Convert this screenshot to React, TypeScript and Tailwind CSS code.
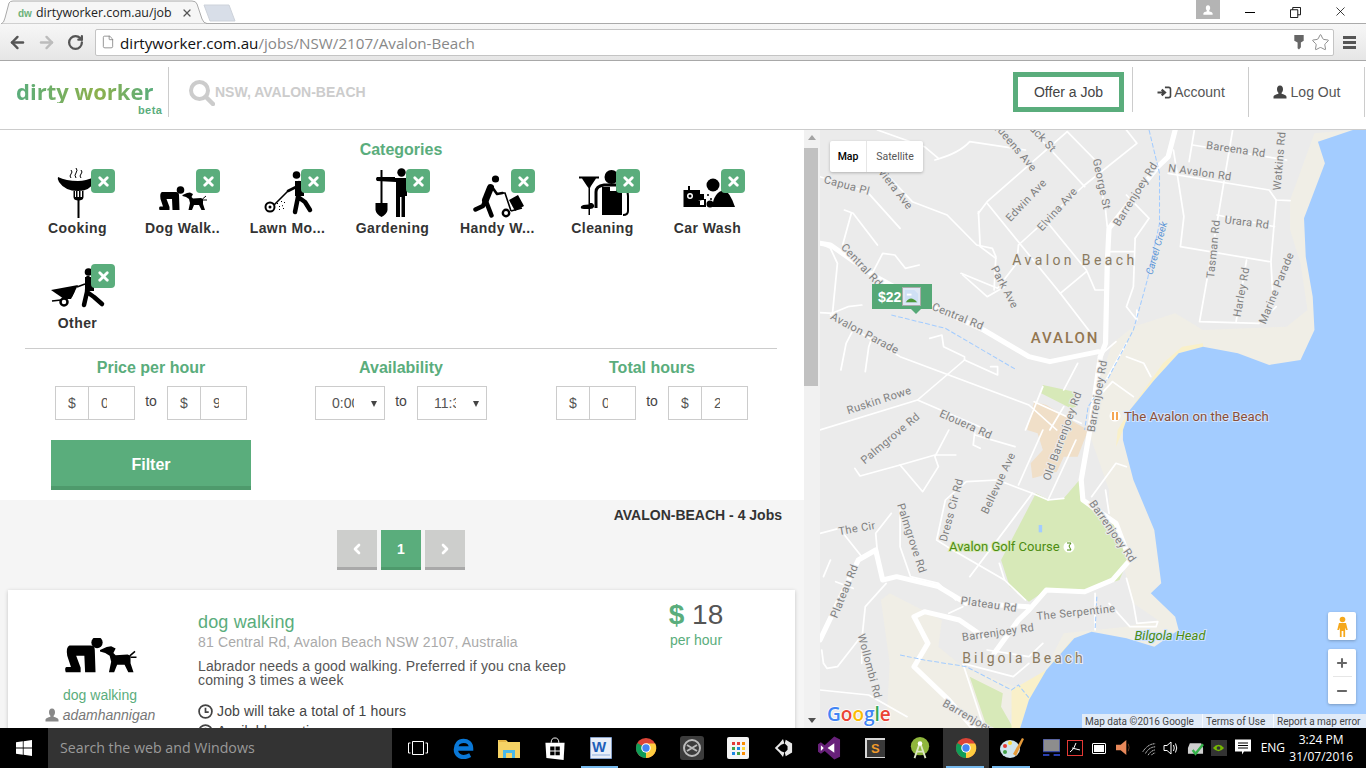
import React from "react";
import { ArrowLeft, ArrowRight, RotateCw, File, Star, X, ChevronLeft, ChevronRight, Minus, Plus } from "lucide-react";

const thinRoads = [
  "M165 0 L300 50 L340 85", "M330 90 Q400 70 430 35 L590 60", "M180 120 L265 215 L365 255 L450 345 L495 355 L505 380 L500 480",
  "M0 140 L135 185 L230 295", "M70 240 L95 250 L165 345", "M90 250 L65 345", "M455 250 L480 215 L710 5", "M480 220 L690 490 L775 605",
  "M455 245 L460 350 L505 385", "M570 345 L760 165 L910 40 L880 0", "M570 345 L565 400 L510 475 L405 430", "M655 280 L765 420 L790 480 L815 480",
  "M690 490 L765 425", "M610 0 L760 170", "M710 5 L790 90 L820 240 L825 290", "M1070 45 L1340 90", "M1000 130 L1290 180 L1310 210 L1350 212",
  "M1185 0 L1140 280 L1090 575 L1260 580 L1310 530", "M1015 60 L1045 260 L1035 350 L1290 395", "M1310 210 L1295 395 L1300 490 L1270 580",
  "M1140 255 L1305 290", "M1225 390 L1195 575", "M1075 0 L1060 95", "M835 365 L900 365", "M905 325 L945 265 L880 195", "M905 325 L900 470 L880 530 L910 570 L910 540",
  "M0 340 L30 355 L50 400 L35 560", "M0 548 L40 550", "M150 430 L180 370 L215 375 L245 415 L285 405", "M410 435 L480 500 L530 470", "M35 550 L80 530 L120 525",
  "M60 720 L75 640 L100 590", "M130 725 L140 650 L150 620", "M30 555 L230 680 L600 825 L680 900", "M315 625 L350 615 L355 650 L415 680 L415 690 L510 735 L510 710 L490 710",
  "M415 690 L280 810", "M0 900 L280 810 L480 900", "M850 635 L800 680", "M880 680 L930 700 L950 740", "M840 755 L900 800", "M880 640 L800 790 L770 900",
  "M640 770 L590 900", "M615 815 L750 880", "M700 830 L660 900", "M740 700 L700 780", "M800 800 L840 755", "M100 1015 L115 1038 L230 1005 L330 975 L390 975",
  "M370 900 L330 980 L340 1010 L295 1085 L230 1005", "M445 900 L440 945 L460 955", "M445 915 L560 950", "M610 1090 L510 1050 L420 1055 L360 1110 L335 1230 L365 1250 L530 1350",
  "M570 1065 L640 900", "M610 1090 L430 1340", "M610 1090 L655 1110 L700 1105", "M655 1110 L735 930", "M205 1150 L160 1210 L165 1270", "M230 1140 L230 1250 L260 1340 L340 1360 L390 1410",
  "M0 1210 L55 1195 L120 1280", "M30 1290 L10 1340", "M190 1360 L130 1430 L120 1530 L120 1600", "M45 1355 L95 1375", "M0 1680 L140 1695 L250 1760", "M5 1560 L10 1600 L20 1615 L50 1610 L110 1530",
  "M370 1450 L410 1430", "M790 1390 L790 1500", "M880 1345 L900 1420 L910 1480 L970 1475 L965 1490 L890 1490 L830 1420", "M820 1080 L830 1150", "M640 1540 L600 1580 L480 1560",
  "M410 1600 L470 1790", "M410 1600 L555 1640 L600 1600", "M515 1300 L530 1350 L590 1410", "M780 1100 L850 1000 L880 1010",
];

const mainRoads = [
  "M1020 0 L1000 80 L970 110 L830 295 L825 400 L820 640 L805 680 L775 900 L750 1050 L755 1110 L850 1180 L890 1290 L840 1350 L760 1385 L650 1380 L600 1440 L570 1470 L500 1570",
  "M800 665 L660 695 L600 680 L470 600 L300 520 L160 440 L30 345 L0 340",
  "M0 1530 L110 1290 L160 1260 L180 1350 L220 1340 L340 1370 L420 1420 L600 1430",
  "M470 1520 L400 1470 L300 1445 L270 1460 L310 1540 L270 1610 L370 1710 L440 1794",
];

// map labels, page coordinates (the svg viewBox starts at the map origin)
const labels: [string, number, number, number][] = [
  ["Bareena Rd", 1236, 153, 8], ["N Avalon Rd", 1200, 176, 8], ["Watkins Rd", 1279, 165, -85], ["Urara Rd", 1247, 226, 7], ["Tasman Rd", 1213, 253, -84],
  ["Harley Rd", 1241, 296, -80], ["Marine Parade", 1276, 292, -68], ["Barrenjoey Rd", 1135, 198, -58], ["George St", 1102, 188, 78], ["Elvina Ave", 1057, 213, -48],
  ["Edwin Ave", 1026, 204, -47], ["Queens Ave", 1015, 150, 50], ["Jack St", 1041, 140, 47], ["Capua Pl", 847, 189, 15], ["Riviera Ave", 893, 189, 52],
  ["Central Rd", 862, 269, 47], ["Central Rd", 958, 320, 22], ["Avalon Parade", 865, 337, 28], ["Park Ave", 1005, 291, 62], ["Barrenjoey Rd", 1097, 400, -80],
  ["Old Barrenjoey Rd", 1062, 440, -70], ["Ruskin Rowe", 879, 404, -18], ["Elouera Rd", 966, 428, 24], ["Palmgrove Rd", 890, 442, -40], ["Bellevue Ave", 998, 487, -65],
  ["Dress Cir Rd", 951, 514, -75], ["The Cir", 857, 532, -10], ["Palmgrove Rd", 912, 542, 72], ["Barrenjoey Rd", 1113, 535, 55], ["Plateau Rd", 989, 608, 8],
  ["The Serpentine", 1076, 616, -6], ["Barrenjoey Rd", 998, 636, -8], ["Plateau Rd", 844, 595, -68], ["Wollombi Rd", 870, 670, 75], ["Barrenjoey", 968, 720, 30],
];

function MapCanvas() {
  return (
    <div className="relative h-full flex-1 overflow-hidden bg-[#ebebeb]">
      <svg viewBox="0 0 1568 1794" preserveAspectRatio="none" className="absolute inset-0 h-full w-full">
        <path fill="#f0eee6" d="M1530 0 L1420 10 L1350 210 L1350 300 L1380 400 L1400 540 L1340 590 L1100 600 L1020 550 L900 590 L840 640 L800 760 L770 900 L830 1080 L830 1150 L880 1340 L900 1420 L970 1470 L880 1490 L700 1510 L560 1794 L1568 1794 L1568 0Z" />
        <path fill="#f0eee6" d="M175 1410 L200 1390 L350 1470 L340 1550 L410 1610 L560 1670 L540 1794 L190 1794 L200 1600Z" />
        <path fill="#d7e9b8" d="M620 1090 L660 1110 L700 1105 L745 1050 L750 1110 L780 1140 L850 1190 L885 1290 L860 1350 L770 1380 L650 1380 L600 1415 L545 1370 L520 1290Z" />
        <path fill="#d7e9b8" d="M430 1640 L525 1690 L520 1730 L555 1794 L480 1794Z M640 765 L730 785 L735 830 L720 835 L635 790Z" />
        <path fill="#f0dfc8" d="M615 815 L650 825 L735 880 L770 900 L740 980 L700 980 L680 1025 L610 1045 L605 1000 L640 960 L625 910 L595 900Z" />
        <path fill="#f9f0c9" d="M1100 640 L1040 650 L985 700 L890 840 L855 900 L850 950 L870 900 L890 840 L960 750 L1030 670 L1100 650Z M730 1520 L650 1620 L550 1680 L550 1794 L575 1794 L600 1710Z" />
        <path fill="#a3ccff" d="M1530 0 L1430 35 L1450 100 L1390 265 L1395 380 L1415 500 L1420 600 L1380 690 L1290 705 L1200 670 L1100 650 L1030 670 L960 750 L890 840 L870 900 L870 930 L900 1050 L960 1200 L980 1360 L950 1390 L1020 1460 L1030 1500 L960 1550 L880 1525 L780 1505 L730 1525 L650 1620 L600 1710 L575 1794 L1568 1794 L1568 0Z" />
        <path fill="#a3ccff" d="M628 1185 h10 v22 h-10z" />
        <g fill="none" stroke="#ffffff" strokeWidth="5" strokeLinejoin="round" strokeLinecap="round">
          {thinRoads.map((d, i) => <path key={i} d={d} />)}
        </g>
        <g fill="none" stroke="#ffffff" strokeWidth="15" strokeLinejoin="round" strokeLinecap="round">
          {mainRoads.map((d, i) => <path key={i} d={d} />)}
        </g>
        <g fill="none" stroke="#a3ccff" strokeWidth="3" strokeDasharray="14 6">
          <path d="M945 0 L975 130 L975 280 L940 450 L900 600 L830 740 L770 830 L760 900" />
          <path d="M205 555 L360 595 L565 720" />
          <path d="M230 1575 L300 1590 L420 1610 L550 1680 L570 1665 L605 1710" />
          <path d="M795 1400 L790 1500" />
        </g>
      </svg>
      <svg viewBox="820 130 546 598" className="absolute inset-0 h-full w-full font-['Roboto',sans-serif]">
        {labels.map(([t, x, y, r], i) => (
          <text key={i} x={x} y={y} textAnchor="middle" fontSize="11" fill="#808080" letterSpacing="0.4" transform={`rotate(${r} ${x} ${y - 4})`} stroke="#ebebeb" strokeWidth="2" paintOrder="stroke">{t}</text>
        ))}
        <text x="1156" y="252" textAnchor="middle" fontSize="10" fontStyle="italic" fill="#5c95d6" transform="rotate(-74 1156 248)">Careel Creek</text>
        <text x="1075" y="265" textAnchor="middle" fontSize="14" fill="#8a7a60" letterSpacing="3.4" stroke="#ebebeb" strokeWidth="2" paintOrder="stroke">Avalon Beach</text>
        <text x="1065" y="343" textAnchor="middle" fontSize="15" fontWeight="500" fill="#937650" letterSpacing="1.9" stroke="#ebebeb" strokeWidth="2" paintOrder="stroke">AVALON</text>
        <text x="1024" y="663" textAnchor="middle" fontSize="14" fill="#8a7a60" letterSpacing="3" stroke="#ebebeb" strokeWidth="2" paintOrder="stroke">Bilgola Beach</text>
        <text x="949" y="551" fontSize="13" fill="#4c8c10" stroke="#d7e9b8" strokeWidth="2" paintOrder="stroke">Avalon Golf Course</text>
        <circle cx="1069" cy="547" r="5.5" fill="#fff" />
        <path d="M1067 543 h4 l-2 3 l2 4 h-4" fill="none" stroke="#4c8c10" strokeWidth="1" />
        <text x="1170" y="640" textAnchor="middle" fontSize="13" fontStyle="italic" fill="#4c8c10" stroke="#cfe3ff" strokeWidth="2" paintOrder="stroke">Bilgola Head</text>
        <circle cx="1115" cy="416" r="5.5" fill="#fff" />
        <path d="M1113 412 v8 M1117 412 v8" stroke="#f28a1e" strokeWidth="1.5" />
        <text x="1124" y="421" fontSize="13.2" fill="#8a4f38" stroke="#cfe3ff" strokeWidth="2" paintOrder="stroke">The Avalon on the Beach</text>
        <text x="827" y="721" fontSize="19" fontWeight="600" fontFamily="Open Sans, sans-serif" stroke="#fff" strokeWidth="1.5" paintOrder="stroke">
          <tspan fill="#4285f4">G</tspan><tspan fill="#ea4335">o</tspan><tspan fill="#fbbc05">o</tspan><tspan fill="#4285f4">g</tspan><tspan fill="#34a853">l</tspan><tspan fill="#ea4335">e</tspan>
        </text>
      </svg>

      {/* price marker */}
      <div className="absolute left-[52px] top-[154px] flex h-[25px] w-[60px] items-center bg-[#55a876] pl-[6px] font-['Liberation_Sans',sans-serif] text-sm font-bold text-white">
        $22
        <span className="ml-[1px] flex h-[19px] w-[19px] items-center justify-center border border-[#aaa] bg-[#dfe8f5]">
          <svg viewBox="0 0 16 16" className="h-[15px] w-[15px]">
            <path d="M1 1 h10 l4 4 v10 h-14z" fill="#cfe0f5" />
            <path d="M2 14 q5 -8 12 0z" fill="#4f9a3a" />
            <path d="M3 5 h5 v2 h-5z" fill="#fff" />
          </svg>
        </span>
        <span className="absolute left-[39px] top-[25px] h-0 w-0 border-x-[5px] border-t-[5px] border-x-transparent border-t-[#55a876]" />
      </div>

      {/* map type */}
      <div className="absolute left-[10px] top-[11px] flex h-[31px] w-[93px] rounded-[2px] bg-white font-['Roboto',sans-serif] text-[10.5px] shadow-[0_1px_3px_rgba(0,0,0,0.25)]">
        <span className="flex w-[37px] items-center justify-center border-r border-[#e6e6e6] font-medium text-black">Map</span>
        <span className="flex flex-1 items-center justify-center text-[#565656]">Satellite</span>
      </div>

      {/* pegman + zoom */}
      <div className="absolute left-[508px] top-[482px] flex h-[28px] w-[28px] items-center justify-center rounded-[2px] bg-white shadow-[0_1px_3px_rgba(0,0,0,0.25)]">
        <svg viewBox="0 0 12 24" className="h-[21px] w-[11px]">
          <circle cx="6" cy="4" r="3.2" fill="#f5a81c" />
          <path d="M2 8 h8 l2 8 h-2 l-1 -3 v11 h-2 v-7 h-2 v7 h-2 v-11 l-1 3 h-2z" fill="#f5a81c" />
        </svg>
      </div>
      <div className="absolute left-[508px] top-[519px] flex h-[55px] w-[28px] flex-col items-center rounded-[2px] bg-white shadow-[0_1px_3px_rgba(0,0,0,0.25)]">
        <span className="flex h-[27px] items-center"><Plus size={14} strokeWidth={3.5} color="#666" /></span>
        <span className="h-px w-[19px] bg-[#e6e6e6]" />
        <span className="flex h-[27px] items-center"><Minus size={14} strokeWidth={3.5} color="#666" /></span>
      </div>

      {/* attribution */}
      <div className="absolute bottom-0 right-0 flex h-[14px] w-[284px] items-center bg-[#f5f5f5]/75 font-['Roboto',sans-serif] text-[10px] text-[#444]">
        <span className="w-[120px] pl-[3px]">Map data ©2016 Google</span>
        <span className="w-[71px] border-l border-white/70 pl-[3px]">Terms of Use</span>
        <span className="border-l border-white/70 pl-[3px]">Report a map error</span>
      </div>
    </div>
  );
}

function DogWalkIcon({ className, viewBox = "0 0 80 52" }: { className?: string; viewBox?: string }) {
  return (
    <svg viewBox={viewBox} className={className}>
      <circle cx="37.5" cy="24" r="3.8" />
      <path d="M19 26 H33 Q36 26 36 29 L36.5 44 H29.5 L29 33 H23.5 L26.5 41 V44 H16.5 Q15.5 41 17 40.5 H20 L17.5 33 Q16.5 27 19 26Z" />
      <path d="M39.5 29 L44 27 L47 26.5 L50 28 L48.5 31 L50 32.5 L58 32 L60 33 L60 38 L62 44 H58.5 L56 39 L51 39 L49 44 H45.5 L47 37 L46 33 L43 31 L39.5 30Z" />
      <path d="M59.5 33 L63 30 M60 34 L64 34" stroke="#000" strokeWidth="1" fill="none" />
    </svg>
  );
}

const categoryIcons: Record<string, React.ReactNode> = {
  Cooking: (
    <svg viewBox="0 0 80 52" className="h-[52px] w-[80px]">
      <path d="M20 11 Q28 15 40 15 Q48 15 56 11 L56 16 Q52 25 40 25 Q27 25 21 16 Q19 13 20 11Z" />
      <path d="M35.5 25 v6 q0 3 4 3.5 V52 h2 V34.5 q4 -.5 4 -3.5 v-6 h-1.5 v6 h-1.5 v-6 h-1.5 v6 h-1.5 v-6 h-1.5 v6 h-1 v-6z" />
      <path d="M33 12 q-2 -2 0 -4 q2 -2 0 -4 M38 12 q-2 -3 0 -5 q2 -3 0 -5 M43 12 q-2 -2 0 -4 q2 -2 0 -4" fill="none" stroke="#000" strokeWidth="1" />
    </svg>
  ),
  "Dog Walk..": <DogWalkIcon className="h-[52px] w-[80px]" />,
  "Lawn Mo...": (
    <svg viewBox="0 0 80 52" className="h-[52px] w-[80px]">
      <circle cx="48.5" cy="9" r="3.8" />
      <circle cx="22" cy="41" r="4.5" fill="none" stroke="#000" strokeWidth="2" />
      <circle cx="22" cy="41" r="1.5" />
      <path d="M26 39 L40 25" fill="none" stroke="#000" strokeWidth="1.6" />
      <path d="M40 25 L48 21" fill="none" stroke="#000" strokeWidth="2.6" strokeLinecap="round" />
      <path d="M51 17 L50 31 L47 46 M50 31 L57 36 L62 44" fill="none" stroke="#000" strokeWidth="4.5" strokeLinecap="round" strokeLinejoin="round" />
      <path d="M47 15 H56 V30 H47Z" />
      <path d="M29 38 l1 -1 M31 41 l1 -1 M33 36 l1 -1 M34 40 l1 -.5 M31 44 l1 -1 M35 43 l1 -1 M36 37 l1 -1" stroke="#000" strokeWidth="1" />
    </svg>
  ),
  Gardening: (
    <svg viewBox="0 0 80 52" className="h-[52px] w-[80px]">
      <circle cx="48.5" cy="6.5" r="4.2" />
      <path d="M24 11 H42 V12 H54 V30 L52 30 V51 H48.5 V31 H47 V51 H43 V16 L24 15 Q22 13 24 11Z" />
      <path d="M27.5 4 H29.5 V37 H27.5Z" />
      <path d="M22.5 37 H34.5 V44 Q34 48 28.5 51 Q23 48 22.5 44Z" />
    </svg>
  ),
  "Handy W...": (
    <svg viewBox="0 0 80 52" className="h-[52px] w-[80px]">
      <circle cx="37.5" cy="13" r="3.6" />
      <path d="M32.5 21.5 L27.5 34" fill="none" stroke="#000" strokeWidth="7" strokeLinecap="round" />
      <path d="M27.5 34 L33.5 49.5 M27.5 34 L25 40 L17.5 43.5" fill="none" stroke="#000" strokeWidth="4.5" strokeLinecap="round" strokeLinejoin="round" />
      <path d="M34 21 L39 28 L44.5 27" fill="none" stroke="#000" strokeWidth="2.6" strokeLinecap="round" strokeLinejoin="round" />
      <path d="M44.5 27 L47 27 L53 45" fill="none" stroke="#000" strokeWidth="1.6" />
      <circle cx="48" cy="47" r="3.2" fill="none" stroke="#000" strokeWidth="2.4" />
      <path d="M51 34 L60 29 L66 40 L57 45Z" />
      <path d="M53 45 L64 42" stroke="#000" strokeWidth="1.6" />
    </svg>
  ),
  Cleaning: (
    <svg viewBox="0 0 80 52" className="h-[52px] w-[80px]">
      <path d="M16 10.5 H36 V12.5 H33 L28 20 L27 22 V37 H29 Q32 39 31 41 Q30 43 27 43 V49 H25.5 V43 H21 Q17 43 18 40.5 Q19 38.5 25.5 38.5 V22 L24 20 L19 12.5 H16Z" />
      <circle cx="48.5" cy="11" r="7" />
      <path d="M33 42 V26 Q33 20 41 19 H60" fill="none" stroke="#000" strokeWidth="3" />
      <path d="M39 21 H59 V49 H39Z" />
      <path d="M47 21 H53 V25 H47Z" fill="#fff" />
      <path d="M60 20 Q65 24 65 30 V45 Q65 49 60 49" fill="none" stroke="#000" strokeWidth="2" />
    </svg>
  ),
  "Car Wash": (
    <svg viewBox="0 0 80 52" className="h-[52px] w-[80px]">
      <path d="M15.5 24 H20 V20 H22 V24 H32 V28 H36 V33 H38 V41 H15.5Z" />
      <circle cx="22" cy="30" r="3" fill="#fff" />
      <circle cx="22" cy="30" r="1.5" />
      <path d="M30 35 h2 v4 h4 v-5 h-2" fill="#fff" />
      <circle cx="45" cy="19" r="6.5" />
      <path d="M44 41 Q46 26 56 24 Q62 26 67 41Z" />
      <circle cx="40" cy="29" r="1" />
      <circle cx="43" cy="33" r="1" />
      <circle cx="42" cy="38" r="3.5" />
    </svg>
  ),
  Other: (
    <svg viewBox="0 0 80 52" className="h-[52px] w-[80px]">
      <circle cx="50.5" cy="11" r="3.8" />
      <path d="M50 17 L49 31 L46 44 M49 31 L56 36 L64 43" fill="none" stroke="#000" strokeWidth="4.5" strokeLinecap="round" strokeLinejoin="round" />
      <path d="M47 16 H56 V30 H47Z" />
      <path d="M13 29 L40 24 L33 38 L26 38Z" />
      <circle cx="26" cy="41" r="3.5" fill="none" stroke="#000" strokeWidth="2.5" />
      <path d="M14 40 L23 39 M33 36 L36 30 M39 26 L47 23" stroke="#000" strokeWidth="1.7" />
    </svg>
  ),
};

const categories = ["Cooking", "Dog Walk..", "Lawn Mo...", "Gardening", "Handy W...", "Cleaning", "Car Wash", "Other"];

function CategoryCell({ name }: { name: string }) {
  return (
    <div className="relative flex h-[95px] w-[105px] flex-col items-center">
      {categoryIcons[name]}
      <span className="absolute left-[66px] top-[3px] flex h-6 w-6 items-center justify-center rounded-[4px] bg-[#5aad7c]">
        <X size={15} strokeWidth={4.5} color="#fff" />
      </span>
      <span className="whitespace-nowrap text-center text-sm font-bold leading-5 tracking-[0.4px] text-[#333]">{name}</span>
    </div>
  );
}

function MoneyInput({ value }: { value: string }) {
  return (
    <div className="flex h-[34px] w-[80px] border border-[#ccc] bg-white text-sm text-[#555]">
      <span className="flex w-[33px] items-center justify-center border-r border-[#ccc]">$</span>
      <span className="ml-[12px] flex w-[6px] items-center overflow-hidden">{value}</span>
    </div>
  );
}

function TimeSelect({ value }: { value: string }) {
  return (
    <div className="relative flex h-[34px] w-[70px] items-center border border-[#ccc] bg-white pl-[16px] text-sm text-[#555]">
      <span className="w-[22px] overflow-hidden whitespace-nowrap">{value}</span>
      <span className="absolute right-[7px] top-[14px] h-0 w-0 border-x-[3.5px] border-t-[6px] border-x-transparent border-t-[#444]" />
    </div>
  );
}

function RangeGroup({ title, children }: { title: string; children: React.ReactNode }) {
  const [a, b] = React.Children.toArray(children);
  return (
    <div className="flex w-[250px] flex-col items-center">
      <h3 className="text-base font-bold leading-5 text-[#5aad7c]">{title}</h3>
      <div className="mt-[8px] flex items-start">
        {a}
        <span className="mx-[10px] w-[12px] text-center text-sm leading-[30px] text-[#444]">to</span>
        {b}
      </div>
    </div>
  );
}

function PageButton({ children, active }: { children: React.ReactNode; active?: boolean }) {
  return (
    <span className={active
      ? "flex h-10 w-10 items-center justify-center border-b-[3px] border-[#4e9a6c] bg-[#5aad7c] text-sm font-bold text-white"
      : "flex h-10 w-10 items-center justify-center border-b-[3px] border-[#a9a9a9] bg-[#cdcecc] text-white"}>
      {children}
    </span>
  );
}

function ClockIcon() {
  return (
    <svg viewBox="0 0 14 14" className="h-[15px] w-[15px] shrink-0" fill="none" stroke="#444" strokeWidth="1.6">
      <circle cx="7" cy="7" r="6" />
      <path d="M7 3.5 V7.5 H10" />
    </svg>
  );
}

function UserGlyph({ className, color }: { className?: string; color: string }) {
  return (
    <svg viewBox="0 0 14 14" className={className} fill={color}>
      <path d="M7 0.5 C9.2 0.5 10 2.4 10 4.2 C10 6 9.2 7.2 8.6 7.8 L8.6 8.8 C10.5 9.5 13.5 10.2 13.5 12 V13.5 H0.5 V12 C0.5 10.2 3.5 9.5 5.4 8.8 L5.4 7.8 C4.8 7.2 4 6 4 4.2 C4 2.4 4.8 0.5 7 0.5Z" />
    </svg>
  );
}

function ChromeBars() {
  return (
    <>
      <div className="relative h-6 bg-white">
        <svg viewBox="0 0 240 24" className="absolute left-0 top-0 h-6 w-[240px]">
          <path d="M204 5 H229 L235 21 H210Z" fill="#d8dee8" stroke="#cdd2da" />
          <path d="M1 24 Q4 23 5 18 L9 3 Q10 1 13 1 H192 Q196 1 197 4 L202 19 Q203 23 208 24Z" fill="#f6f6f6" stroke="#aaa" />
        </svg>
        <span className="absolute left-[18px] top-[9px] text-[10px] font-bold leading-[9px] text-[#6db27a]">dw</span>
        <span className="absolute left-[36px] top-[3px] w-[136px] overflow-hidden whitespace-nowrap font-['Open_Sans',sans-serif] text-[12.4px] leading-5 text-[#222]">dirtyworker.com.au/jobs/NSW</span>
        <X size={12} strokeWidth={2.5} color="#555" className="absolute left-[181px] top-[7px]" />
        <div className="absolute bottom-0 left-[206px] right-0 h-px bg-[#aaa]" />
        <div className="absolute left-[1196px] top-0 flex h-[19px] w-[24px] items-center justify-center bg-[#b4b4b4]">
          <UserGlyph className="h-[10px] w-[10px]" color="#fff" />
        </div>
        <span className="absolute left-[1245px] top-[12px] h-px w-[10px] bg-black" />
        <svg viewBox="0 0 12 12" className="absolute left-[1290px] top-[7px] h-[11px] w-[11px]" fill="none" stroke="#000">
          <path d="M.5 3 H8.5 V11.5 H.5Z M3 3 V.5 H11.5 V8.5 H8.5" />
        </svg>
        <X size={15} strokeWidth={1.2} color="#000" className="absolute left-[1333px] top-[4px]" />
      </div>
      <div className="relative flex h-[37px] items-center border-b border-b-[#a8a8a8] bg-gradient-to-b from-[#f7f7f7] to-[#e6e6e6]">
        <ArrowLeft size={19} strokeWidth={3} color="#555" className="absolute left-[8px]" />
        <ArrowRight size={19} strokeWidth={3} color="#bcbcbc" className="absolute left-[37px]" />
        <RotateCw size={17} strokeWidth={3.2} color="#555" className="absolute left-[67px]" />
        <div className="ml-[95px] flex h-[27px] w-[1239px] items-center rounded-[2px] border border-[#c4c4c4] bg-white">
          <File size={14} strokeWidth={1.3} color="#777" className="ml-[5px]" />
          <span className="ml-[5px] mt-[2px] whitespace-nowrap font-['Open_Sans',sans-serif] text-[15.2px] text-[#888]"><span className="text-[#111]">dirtyworker.com.au</span>/jobs/NSW/2107/Avalon-Beach</span>
        </div>
        <svg viewBox="0 0 10 16" className="absolute left-[1294px] h-[15px] w-[10px]" fill="#666">
          <path d="M0 0 H10 V6 L7 8 V13 L5 15.5 L3.5 14 V8 L0 6Z" />
        </svg>
        <Star size={19} strokeWidth={1.2} color="#888" className="absolute left-[1311px]" />
        <span className="absolute left-[1343px] flex w-[13px] flex-col gap-[2px]">
          <i className="h-[3px] bg-[#555]" /><i className="h-[3px] bg-[#555]" /><i className="h-[3px] bg-[#555]" />
        </span>
      </div>
    </>
  );
}

function SiteHeader() {
  return (
    <header className="flex h-[69px] items-start border-b border-[#ccc] bg-white">
      <div className="relative ml-[16px] mt-[6px] h-[50px] w-[153px] border-r border-[#ccc]">
        <span className="absolute left-0 top-[12px] bg-[linear-gradient(90deg,#5aad7c,#8db04c_60%,#5aad7c)] bg-clip-text font-['Open_Sans',sans-serif] text-[22px] font-bold leading-[24px] text-transparent">dirty worker</span>
        <span className="absolute left-[122px] top-[37px] text-[11px] font-bold leading-3 tracking-[0.4px] text-[#5aad7c]">beta</span>
      </div>
      <svg viewBox="0 0 26 26" className="ml-[20px] mt-[19px] h-[26px] w-[26px]" fill="none" stroke="#ccc">
        <circle cx="10.5" cy="10.5" r="8.5" strokeWidth="4" />
        <path d="M17 17 L24 24" strokeWidth="4.5" strokeLinecap="round" />
      </svg>
      <span className="mt-[21px] text-sm font-bold leading-5 text-[#ccc]">NSW, AVALON-BEACH</span>
      <div className="ml-auto flex items-start">
        <span className="mt-[11px] flex h-10 w-[111px] items-center justify-center border-[5px] border-[#5aad7c] text-sm text-[#444]">Offer a Job</span>
        <span className="ml-[8px] mt-[6px] h-[45px] w-px bg-[#ccc]" />
        <span className="mt-[6px] flex h-[50px] w-[116px] items-center justify-center border-r border-[#ccc] text-sm text-[#555]">
          <svg viewBox="0 0 16 14" className="mr-[2px] h-[13px] w-[16px]" fill="none" stroke="#444" strokeWidth="1.7">
            <path d="M1 7 H8 M5.5 4 L9 7 L5.5 10" strokeWidth="2.4" />
            <path d="M9 1.5 H13 Q15 1.5 15 3.5 V10.5 Q15 12.5 13 12.5 H9" />
          </svg>
          Account
        </span>
        <span className="mt-[6px] flex h-[50px] w-[116px] items-center justify-center border-r border-[#ccc] text-sm text-[#555]">
          <UserGlyph className="mr-[4px] h-[14px] w-[14px]" color="#444" />
          Log Out
        </span>
        <span className="w-px" />
      </div>
    </header>
  );
}

function Filters() {
  return (
    <section className="h-[370px] shrink-0 bg-white">
      <h2 className="pr-[2px] pt-[10px] text-center text-base font-bold leading-5 text-[#5aad7c]">Categories</h2>
      <div className="ml-[25px] mt-[6px] flex w-[752px] flex-wrap">
        {categories.map((c) => <CategoryCell key={c} name={c} />)}
      </div>
      <div className="ml-[25px] mr-[27px] mt-[-8px] h-px bg-[#ccc]" />
      <div className="ml-[26px] mt-[9px] flex">
        <RangeGroup title="Price per hour"><MoneyInput value="0" /><MoneyInput value="9" /></RangeGroup>
        <RangeGroup title="Availability"><TimeSelect value="0:00" /><TimeSelect value="11:30" /></RangeGroup>
        <div className="ml-[1px]">
          <RangeGroup title="Total hours"><MoneyInput value="0" /><MoneyInput value="2" /></RangeGroup>
        </div>
      </div>
      <button className="ml-[51px] mt-[20px] h-[50px] w-[200px] border-b-4 border-[#4e9a6c] bg-[#5aad7c] pt-[4px] text-base font-bold text-white">Filter</button>
    </section>
  );
}

function JobCard() {
  return (
    <article className="mx-[8px] mt-[20px] flex h-[300px] w-[787px] bg-white shadow-[0_1px_4px_rgba(0,0,0,0.2)]">
      <div className="flex w-[184px] flex-col items-center pt-[48px]">
        <DogWalkIcon className="h-[35px] w-[74px]" viewBox="15 21 49 23.5" />
        <span className="mt-[12px] text-sm leading-5 text-[#5aad7c]">dog walking</span>
        <span className="flex items-center text-sm italic leading-5 text-[#777]">
          <UserGlyph className="mr-[4px] h-[14px] w-[14px]" color="#888" />
          adamhannigan
        </span>
      </div>
      <div className="ml-[6px] w-[399px] pt-[21px] tracking-[0.15px]">
        <h3 className="text-lg leading-[22px] text-[#5aad7c]">dog walking</h3>
        <p className="text-sm leading-[18px] text-[#aaa]">81 Central Rd, Avalon Beach NSW 2107, Australia</p>
        <p className="mt-[8px] w-[375px] text-sm leading-[14px] text-[#555]">Labrador needs a good walking. Preferred if you cna keep coming 3 times a week</p>
        <p className="mt-[14px] flex items-center gap-[4px] text-sm leading-5 text-[#444]"><ClockIcon />Job will take a total of 1 hours</p>
        <p className="flex items-center gap-[4px] text-sm leading-5 text-[#444]"><ClockIcon />Available anytime</p>
      </div>
      <div className="flex flex-1 flex-col items-center pt-[8px]">
        <span className="text-[28px] leading-[34px] text-[#555]"><b className="text-[#5aad7c]">$</b> 18</span>
        <span className="text-sm leading-4 text-[#5aad7c]">per hour</span>
      </div>
    </article>
  );
}

function Scrollbar() {
  return (
    <div className="relative h-full w-[16px] bg-[#f1f1f1]">
      <span className="absolute left-[4px] top-[5px] h-0 w-0 border-x-[4px] border-b-[5px] border-x-transparent border-b-[#a3a3a3]" />
      <span className="absolute left-0 top-[18px] h-[238px] w-[14px] bg-[#c1c1c1]" />
      <span className="absolute bottom-[5px] left-[4px] h-0 w-0 border-x-[4px] border-t-[5px] border-x-transparent border-t-[#505050]" />
    </div>
  );
}

function TaskSlot({ children, active, running }: { children: React.ReactNode; active?: boolean; running?: boolean }) {
  return (
    <div className={active ? "relative flex h-10 w-[45.7px] items-center justify-center bg-[#333]" : "relative flex h-10 w-[45.7px] items-center justify-center"}>
      {children}
      {running && <span className="absolute bottom-0 left-[3px] right-[5px] h-[2px] bg-[#76b9ed]" />}
    </div>
  );
}

function ChromeLogo() {
  return (
    <svg viewBox="0 0 24 24" className="h-[22px] w-[22px]">
      <circle cx="12" cy="12" r="11" fill="#db4437" />
      <path d="M12 12 L2.5 6.5 A11 11 0 0 0 12 23 Z" fill="#0f9d58" />
      <path d="M12 7 H22 A11 11 0 0 1 12 23 L12 12Z" fill="#ffcd40" />
      <circle cx="12" cy="12" r="5.2" fill="#fff" />
      <circle cx="12" cy="12" r="4" fill="#4285f4" />
    </svg>
  );
}

function Taskbar() {
  return (
    <footer className="flex h-10 shrink-0 items-center bg-black text-white">
      <div className="flex h-10 w-[48px] items-center justify-center">
        <svg viewBox="0 0 16 16" className="h-[16px] w-[16px]" fill="#fff">
          <path d="M0 2.3 L6.8 1.3 V7.5 H0Z M7.6 1.2 L16 0 V7.5 H7.6Z M0 8.4 H6.8 V14.7 L0 13.7Z M7.6 8.4 H16 V16 L7.6 14.8Z" />
        </svg>
      </div>
      <div className="flex h-10 w-[344px] items-center bg-[#333] pl-[12px] font-['Open_Sans',sans-serif] text-[14.2px] text-[#9a9a9a]">Search the web and Windows</div>
      <div className="ml-[3px] flex">
        <TaskSlot>
          <svg viewBox="0 0 20 14" className="h-[14px] w-[20px]" fill="none" stroke="#fff"><path d="M4.5 .5 H15.5 V13.5 H4.5Z M2.5 2 H.5 V12 H2.5 M17.5 2 H19.5 V12 H17.5" /></svg>
        </TaskSlot>
        <TaskSlot>
          <svg viewBox="0 0 22 22" className="h-[21px] w-[21px]" fill="none" stroke="#0a78d7" strokeWidth="4.5"><path d="M3 11 H19 C19 5 15 3 11 3 C6 3 3 7 3 12 C3 17 7 20 11 20 C14 20 16 19 18 18" /></svg>
        </TaskSlot>
        <TaskSlot>
          <svg viewBox="0 0 22 20" className="h-[20px] w-[22px]"><path d="M0 2 H8 L10 4 H22 V20 H0Z" fill="#f6d365" /><path d="M5 20 V12 H17 V20 H14 V15 H8 V20Z" fill="#4ab9e8" /><path d="M1 2 H8 V4 H1Z" fill="#e5b544" /></svg>
        </TaskSlot>
        <TaskSlot>
          <svg viewBox="0 0 20 24" className="h-[23px] w-[20px]" fill="#fff"><path d="M0 6 H20 L19 24 L1 22Z" /><path d="M6 6 Q6 1 10 1 Q14 1 14 6" fill="none" stroke="#fff" /><path d="M5 10 H9.5 V14 H5Z M10.5 10 H15 V14 H10.5Z M5 15 H9.5 V19 H5Z M10.5 15 H15 V19 H10.5Z" fill="#000" /></svg>
        </TaskSlot>
        <TaskSlot running>
          <svg viewBox="0 0 22 22" className="h-[22px] w-[22px]"><rect width="22" height="22" fill="#e8eef8" /><rect y="0" width="22" height="22" fill="none" stroke="#2b579a" strokeWidth="1" /><text x="2" y="15" fontSize="15" fontWeight="bold" fill="#1f5fb8" fontFamily="Liberation Sans">W</text><path d="M2 18 H20" stroke="#8fb0de" /></svg>
        </TaskSlot>
        <TaskSlot><ChromeLogo /></TaskSlot>
        <TaskSlot>
          <svg viewBox="0 0 24 24" className="h-[24px] w-[24px]"><rect width="24" height="24" rx="3" fill="#3c3c3c" /><circle cx="12" cy="12" r="8" fill="none" stroke="#bbb" strokeWidth="2" /><path d="M7 9 L17 15 M17 9 L7 15" stroke="#bbb" strokeWidth="2" /></svg>
        </TaskSlot>
        <TaskSlot>
          <svg viewBox="0 0 22 22" className="h-[22px] w-[22px]"><rect width="22" height="22" rx="2" fill="#f5f5f5" /><path d="M5 5 h3 v3 h-3z" fill="#e53935" /><path d="M10 5 h3 v3 h-3z" fill="#e53935" /><path d="M15 5 h3 v3 h-3z" fill="#fb8c00" /><path d="M5 10 h3 v3 h-3z" fill="#43a047" /><path d="M10 10 h3 v3 h-3z" fill="#1e88e5" /><path d="M15 10 h3 v3 h-3z" fill="#fdd835" /><path d="M5 15 h3 v3 h-3z" fill="#1e88e5" /><path d="M10 15 h3 v3 h-3z" fill="#43a047" /><path d="M15 15 h3 v3 h-3z" fill="#fb8c00" /></svg>
        </TaskSlot>
        <TaskSlot>
          <svg viewBox="0 0 22 22" className="h-[20px] w-[20px]" fill="#e8e8e8"><path d="M11 1 L12.5 6 L9 7.5 L5 11 L9 14.5 L12.5 16 L11 21 L7 16 L2 11 L7 6Z" /><path d="M14 2 L21 6 L21 16 L14 20 L13 16 L16 13 V9 L13 6Z" /></svg>
        </TaskSlot>
        <TaskSlot>
          <svg viewBox="0 0 24 24" className="h-[24px] w-[23px]"><path d="M17 0 L23 3 V21 L17 24 L7 15 L3 18 L0 16 V8 L3 6 L7 9Z" fill="#68217a" /><path d="M17 7 V17 L10 12Z M3 9 L6 12 L3 15Z" fill="#fff" /></svg>
        </TaskSlot>
        <TaskSlot>
          <svg viewBox="0 0 22 22" className="h-[22px] w-[22px]"><path d="M1 1 H21 V21 H1Z" fill="#d8d8d8" /><path d="M3 3 H21 V20 H3Z" fill="#3a3a3a" /><text x="7" y="16" fontSize="13" fontWeight="bold" fill="#f09a2a" fontFamily="Liberation Sans">S</text></svg>
        </TaskSlot>
        <TaskSlot>
          <svg viewBox="0 0 24 24" className="h-[24px] w-[22px]"><circle cx="12" cy="10" r="10" fill="#8fb63c" /><path d="M12 6 L6 23 M12 6 L18 23 M8 16 H16" stroke="#dfe8c8" strokeWidth="2" fill="none" /><circle cx="12" cy="7" r="2.5" fill="#fff" /></svg>
        </TaskSlot>
        <TaskSlot active running><ChromeLogo /></TaskSlot>
        <TaskSlot running>
          <svg viewBox="0 0 26 24" className="h-[24px] w-[26px]"><ellipse cx="11" cy="13" rx="10" ry="9" fill="#cfe4ee" /><circle cx="6" cy="10" r="2" fill="#e53935" /><circle cx="11" cy="7" r="2" fill="#fdd835" /><circle cx="6" cy="16" r="2" fill="#43a047" /><path d="M14 18 L23 2 L25 3 L17 20Z" fill="#e59a3a" /></svg>
        </TaskSlot>
      </div>
      <div className="relative ml-[-1px] h-10 flex-1 font-['Open_Sans',sans-serif]">
        <svg viewBox="0 0 16 16" className="absolute left-[9px] top-[11px] h-[17px] w-[17px]"><path d="M0 0 H16 V12 H0Z" fill="#8d8d8d" stroke="#2a3fb0" /><path d="M0 15 H6 M10 15 H16" stroke="#2a3fb0" strokeWidth="2" /></svg>
        <span className="absolute left-[33px] top-[12px] flex h-[16px] w-[16px] items-center justify-center border border-[#e53935]">
          <svg viewBox="0 0 12 12" className="h-[12px] w-[12px]" fill="none" stroke="#fff"><path d="M1 10 Q5 8 7 1 M3 6 Q7 7 11 8" /></svg>
        </span>
        <span className="absolute left-[58px] top-[15px] h-[11px] w-[14px] rounded-[1px] border border-white p-[1px]"><i className="block h-full w-[10px] bg-white" /></span>
        <svg viewBox="0 0 16 16" className="absolute left-[82px] top-[11px] h-[17px] w-[15px]"><path d="M0 5 H5 L11 0 V16 L5 11 H0Z" fill="#e8885a" /><path d="M13 4 Q15 8 13 12" stroke="#6a3a20" fill="none" /></svg>
        <svg viewBox="0 0 16 14" className="absolute left-[108px] top-[14px] h-[14px] w-[14px]" fill="none" stroke="#fff"><path d="M1 10 Q7 1 15 1 M4 12 Q8 5 15 4.5 M7 14 Q10 9 15 8 M11 14 Q12 12 15 11.5" strokeDasharray="1.5 .6" /></svg>
        <svg viewBox="0 0 16 16" className="absolute left-[129px] top-[12px] h-[16px] w-[16px]" fill="none" stroke="#fff"><path d="M1 5.5 H4 L8 2 V14 L4 10.5 H1Z M10.5 5 Q12 8 10.5 11 M12.5 3.5 Q15 8 12.5 12.5" /></svg>
        <svg viewBox="0 0 18 16" className="absolute left-[153px] top-[13px] h-[16px] w-[17px]"><path d="M3 2 H15 L17 7 V13 H1 V7Z" fill="#cfcfcf" /><path d="M6 9 L9 13 L17 3" stroke="#35b34a" strokeWidth="2.5" fill="none" /></svg>
        <span className="absolute left-[177px] top-[12px] flex h-[16px] w-[16px] items-center justify-center bg-[#333]">
          <svg viewBox="0 0 14 10" className="h-[10px] w-[13px]"><path d="M1 5 Q7 -2 13 5 Q7 12 1 5Z" fill="#76b900" /><circle cx="7" cy="5" r="2" fill="#333" /></svg>
        </span>
        <svg viewBox="0 0 16 16" className="absolute left-[201px] top-[11px] h-[17px] w-[16px]"><path d="M0 0 H16 V12 H9 L7 15 V12 H0Z" fill="#fff" /><path d="M3 3.5 H13 M3 6 H13 M3 8.5 H13" stroke="#000" /></svg>
        <span className="absolute left-[227px] top-[12px] text-xs leading-4 text-white">ENG</span>
        <div className="absolute right-[13px] top-[3px] text-center text-xs leading-[17px] text-white">
          <div>3:24 PM</div>
          <div>31/07/2016</div>
        </div>
      </div>
    </footer>
  );
}

export default function App() {
  return (
    <div className="flex h-[768px] w-[1366px] flex-col overflow-hidden font-['Liberation_Sans',Arial,sans-serif]">
      <ChromeBars />
      <SiteHeader />
      <main className="flex min-h-0 flex-1">
        <div className="h-full w-[804px] shrink-0 overflow-hidden bg-[#f5f5f5]">
          <Filters />
          <p className="mr-[22px] pt-[7px] text-right text-sm font-bold leading-4 text-[#333]">AVALON-BEACH - 4 Jobs</p>
          <div className="mt-[7px] flex justify-center gap-1 pr-[2px]">
            <PageButton><ChevronLeft size={16} strokeWidth={4} /></PageButton>
            <PageButton active>1</PageButton>
            <PageButton><ChevronRight size={16} strokeWidth={4} /></PageButton>
          </div>
          <JobCard />
        </div>
        <Scrollbar />
        <MapCanvas />
      </main>
      <Taskbar />
    </div>
  );
}
